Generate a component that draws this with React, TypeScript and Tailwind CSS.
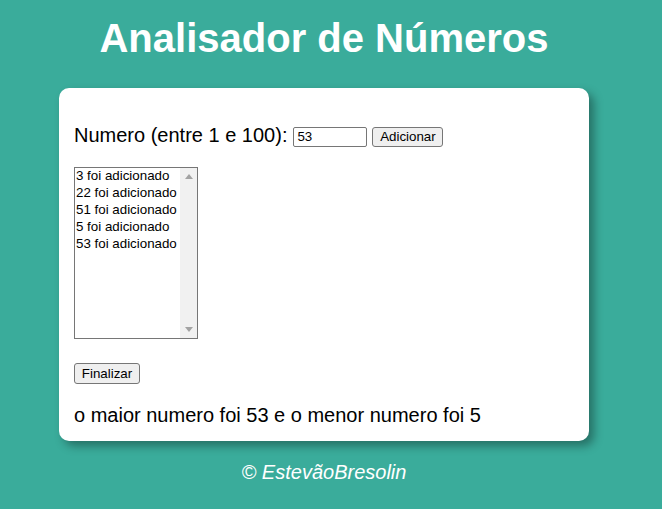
import React from "react";

export default function App() {
  const items = ["3 foi adicionado", "22 foi adicionado", "51 foi adicionado", "5 foi adicionado", "53 foi adicionado"];
  return (
    <div className="min-h-[509px] w-full bg-[#3aac9b] font-['Liberation_Sans',Arial,sans-serif]">
      <div className="w-[648px] flex flex-col items-center">
        <h1 className="mt-[15px] text-[40px] leading-[46px] font-bold text-white">Analisador de Números</h1>
        <div className="mt-[27px] w-[530px] bg-white rounded-[10px] shadow-[5px_5px_10px_rgba(0,0,0,0.35)] px-[15px] pt-[36px] pb-[14px]">
          <div className="flex items-center h-[23px]">
            <span className="text-[20px] leading-[23px] text-black">Numero (entre 1 e 100):</span>
            <div className="ml-[6px] mt-[2px] w-[74px] h-[20px] border border-[#767676] rounded-[2px] bg-white flex items-center pl-[3px] text-[13.33px] text-black">53</div>
            <div className="ml-[5px] mt-[2px] w-[71px] h-[20px] border border-[#767676] rounded-[3px] bg-[#efefef] flex items-center justify-center text-[13.33px] text-black">Adicionar</div>
          </div>
          <div className="mt-[20px] w-[124px] h-[172px] border border-[#767676] flex">
            <div className="flex-1 flex flex-col pl-[1px] -mt-[1px]">
              {items.map((t) => (
                <div key={t} className="text-[13.33px] leading-[17px] text-black whitespace-nowrap">{t}</div>
              ))}
            </div>
            <div className="w-[17px] h-full bg-[#f1f1f1] flex flex-col items-center justify-between py-[6px]">
              <svg width="8" height="5" viewBox="0 0 8 5"><polygon points="0,5 8,5 4,0" fill="#a3a3a3" /></svg>
              <svg width="8" height="5" viewBox="0 0 8 5"><polygon points="0,0 8,0 4,5" fill="#a3a3a3" /></svg>
            </div>
          </div>
          <div className="mt-[24px] w-[66px] h-[21px] border border-[#767676] rounded-[3px] bg-[#efefef] flex items-center justify-center text-[13.33px] text-black">Finalizar</div>
          <div className="mt-[20px] text-[20px] leading-[23px] text-black">o maior numero foi 53 e o menor numero foi 5</div>
        </div>
        <div className="mt-[20px] text-[20px] leading-[23px] italic text-white">© EstevãoBresolin</div>
      </div>
    </div>
  );
}
